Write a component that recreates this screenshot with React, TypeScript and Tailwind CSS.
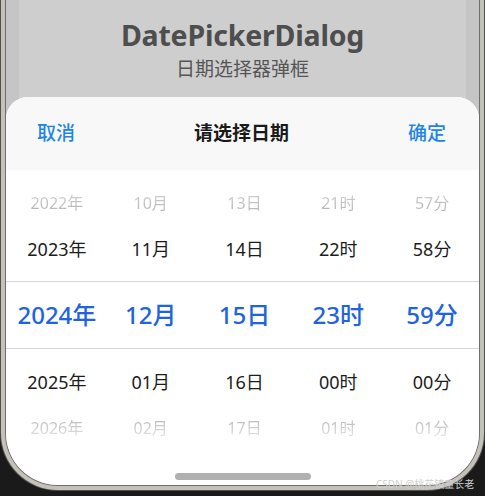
const font = { fontFamily: '"Noto Sans", "Noto Sans CJK SC", sans-serif' };

const columns = [
  ['2022年', '2023年', '2024年', '2025年', '2026年'],
  ['10月', '11月', '12月', '01月', '02月'],
  ['13日', '14日', '15日', '16日', '17日'],
  ['21时', '22时', '23时', '00时', '01时'],
  ['57分', '58分', '59分', '00分', '01分'],
];

const row = (i: number) => columns.map((c) => c[i]);

const App = () => {
  return (
    <div className="relative w-[485px] h-[496px] bg-[#1a1a1a] overflow-hidden" style={font}>
      {/* phone rim */}
      <div className="h-[491px] rounded-b-[58px] bg-[#505050] px-px pb-px">
        <div className="h-full rounded-b-[57px] bg-[#c4c1b9] px-[4px] pb-[4px]">
          <div className="h-full rounded-b-[53px] bg-[#6e6e6e] px-px pb-px">
            <div className="h-full rounded-b-[52px] overflow-hidden bg-[#c5c5c5] flex flex-col">
              {/* dimmed page behind the dialog */}
              <div className="h-[118px] shrink-0 mx-[13px] bg-[#cecece] flex flex-col items-center pt-[16px]">
                <div className="text-[28.5px] leading-[38px] font-bold text-[#4e4e4e] tracking-[-0.2px]">
                  DatePickerDialog
                </div>
                <div className="text-[19px] leading-[26px] text-[#555555] mt-[2px]">日期选择器弹框</div>
              </div>

              {/* dialog */}
              <div className="-mt-[21px] relative flex-1 flex flex-col bg-white rounded-t-[22px]">
                <div className="h-[73px] shrink-0 bg-[#f8f8f8] rounded-t-[22px] flex items-center justify-between pl-[31px] pr-[33px]">
                  <span className="text-[19px] font-medium text-[#1e86e6]">取消</span>
                  <span className="text-[19px] font-bold text-[#1a1a1a]">请选择日期</span>
                  <span className="text-[19px] font-medium text-[#1e86e6]">确定</span>
                </div>

                <div className="pt-[10px]">
                  <div className="grid grid-cols-5 pl-[4px] h-[46px] items-center text-center text-[16px]">
                    {row(0).map((t) => (
                      <span key={t} className="bg-linear-to-b from-[#d2d2d2] to-[#b2b2b2] bg-clip-text text-transparent">
                        {t}
                      </span>
                    ))}
                  </div>
                  <div className="grid grid-cols-5 pl-[4px] h-[46px] items-center text-center text-[18px] text-[#1c1c1c]">
                    {row(1).map((t) => (
                      <span key={t}>{t}</span>
                    ))}
                  </div>
                  <div className="mt-[9px] h-[68px] border-y border-[#d6d6d6] grid grid-cols-5 pl-[4px] items-center text-center text-[24px] font-medium text-[#1e63e0]">
                    {row(2).map((t) => (
                      <span key={t}>{t}</span>
                    ))}
                  </div>
                  <div className="mt-[10px] grid grid-cols-5 pl-[4px] h-[46px] items-center text-center text-[18px] text-[#1c1c1c]">
                    {row(3).map((t) => (
                      <span key={t}>{t}</span>
                    ))}
                  </div>
                  <div className="grid grid-cols-5 pl-[4px] h-[46px] items-center text-center text-[16px]">
                    {row(4).map((t) => (
                      <span key={t} className="bg-linear-to-b from-[#b2b2b2] to-[#ebebeb] bg-clip-text text-transparent">
                        {t}
                      </span>
                    ))}
                  </div>
                </div>

                <div className="mt-[22px] mx-auto h-[7px] w-[136px] rounded-full bg-[#b0b0b0]" />
              </div>
            </div>
          </div>
        </div>
      </div>

      <div className="absolute left-[376px] top-[477px] text-[10px] leading-[14px] text-[#cfcfcf] whitespace-nowrap">
        CSDN @桃花镇童长老
      </div>
    </div>
  );
};

export default App;
